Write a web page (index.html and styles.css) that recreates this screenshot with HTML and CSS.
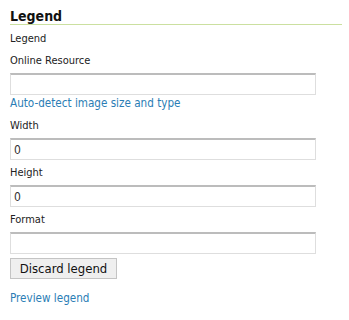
FILE: index.html
```html
<!DOCTYPE html>
<html lang="en">
<head>
    <meta charset="UTF-8">
    <title>Legend</title>
    <link rel="stylesheet" href="styles.css">
</head>
<body>
    <div class="panel">
        <h2 class="panel-title">Legend</h2>

        <div class="label legend-label">Legend</div>

        <div class="field">
            <label for="onlineResource">Online Resource</label>
            <input type="text" id="onlineResource">
        </div>
        <a href="#" class="link auto-detect">Auto-detect image size and type</a>

        <div class="field">
            <label for="width">Width</label>
            <input type="text" id="width" value="0">
        </div>

        <div class="field">
            <label for="height">Height</label>
            <input type="text" id="height" value="0">
        </div>

        <div class="field">
            <label for="format">Format</label>
            <input type="text" id="format">
        </div>

        <button type="button" class="discard-btn">Discard legend</button>

        <a href="#" class="link preview">Preview legend</a>
    </div>
</body>
</html>
```

FILE: styles.css
```css
body {
    margin: 0;
    padding: 8px 10px;
    font-family: "DejaVu Sans Condensed", "DejaVu Sans", sans-serif;
    font-size: 11px;
    color: #222;
    background: #fff;
}

.panel {
    width: 332px;
}

.panel-title {
    margin: 0;
    font-size: 14px;
    line-height: 16px;
    font-weight: bold;
    color: #111;
    border-bottom: 1px solid #cbe0a0;
}

.label, label {
    display: block;
    line-height: 14px;
}

.legend-label {
    margin-top: 7px;
    margin-bottom: 8px;
}

.field {
    margin-bottom: 6px;
}

.field label {
    margin-bottom: 5px;
}

input[type="text"] {
    display: block;
    box-sizing: border-box;
    width: 306px;
    height: 22px;
    margin: 0;
    padding: 0 3px;
    border: 1px solid #dedede;
    border-top: 2px solid #bcbcbc;
    font-family: inherit;
    font-size: 12px;
    color: #333;
    background: #fff;
}

.link {
    display: block;
    font-size: 11.6px;
    line-height: 15px;
    color: #2a7db5;
    text-decoration: none;
}

.auto-detect {
    margin-top: -5px;
    margin-bottom: 8px;
}

.discard-btn {
    display: block;
    box-sizing: border-box;
    width: 107px;
    height: 21px;
    margin-top: -2px;
    padding: 0;
    font-family: inherit;
    font-size: 13px;
    color: #111;
    background: #efefef;
    border: 1px solid #c4c4c4;
    border-radius: 0;
}

.preview {
    margin-top: 12px;
}
```
